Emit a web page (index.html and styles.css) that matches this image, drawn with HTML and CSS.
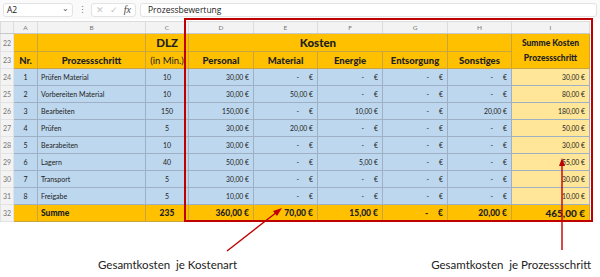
FILE: index.html
```html
<!DOCTYPE html>
<html lang="de">
<head>
    <meta charset="UTF-8">
    <title>Prozessbewertung</title>
    <link rel="stylesheet" href="styles.css">
</head>
<body>
<div class="page">
    <!-- Bearbeitungsleiste -->
    <div class="formula-bar">
        <div class="name-box">A2 <span class="chevron">&#8964;</span></div>
        <span class="dots">&#8942;</span>
        <div class="fx-box">
            <span class="fx-btn">&#10005;</span>
            <span class="fx-btn">&#10003;</span>
            <span class="fx-label">fx</span>
        </div>
        <div class="formula-input">Prozessbewertung</div>
    </div>

    <table class="sheet">
        <colgroup>
            <col style="width:13px"><col style="width:24px"><col style="width:108px"><col style="width:43px">
            <col style="width:65px"><col style="width:64px"><col style="width:65px"><col style="width:65px">
            <col style="width:64px"><col style="width:78px">
        </colgroup>
        <tr class="col-head">
            <td class="corner"></td><td>A</td><td>B</td><td>C</td><td>D</td><td>E</td><td>F</td><td>G</td><td>H</td><td>I</td>
        </tr>
        <tr class="h22">
            <td class="rn">22</td>
            <td class="hd"></td><td class="hd"></td>
            <td class="hd big">DLZ</td>
            <td class="hd big" colspan="4">Kosten</td>
            <td class="hd"></td>
            <td class="hd sum-head" rowspan="2">Summe Kosten<br>Prozessschritt</td>
        </tr>
        <tr class="h23">
            <td class="rn">23</td>
            <td class="hd">Nr.</td><td class="hd">Prozessschritt</td><td class="hd light">(in Min.)</td>
            <td class="hd">Personal</td><td class="hd">Material</td><td class="hd">Energie</td>
            <td class="hd">Entsorgung</td><td class="hd">Sonstiges</td>
        </tr>
        <tr><td class="rn">24</td><td class="c">1</td><td>Prüfen Material</td><td class="c">10</td><td class="n">30,00 €</td><td class="n"><i>-</i>€</td><td class="n"><i>-</i>€</td><td class="n"><i>-</i>€</td><td class="n"><i>-</i>€</td><td class="n tot">30,00 €</td></tr>
        <tr><td class="rn">25</td><td class="c">2</td><td>Vorbereiten Material</td><td class="c">10</td><td class="n">30,00 €</td><td class="n">50,00 €</td><td class="n"><i>-</i>€</td><td class="n"><i>-</i>€</td><td class="n"><i>-</i>€</td><td class="n tot">80,00 €</td></tr>
        <tr><td class="rn">26</td><td class="c">3</td><td>Bearbeiten</td><td class="c">150</td><td class="n">150,00 €</td><td class="n"><i>-</i>€</td><td class="n">10,00 €</td><td class="n"><i>-</i>€</td><td class="n">20,00 €</td><td class="n tot">180,00 €</td></tr>
        <tr><td class="rn">27</td><td class="c">4</td><td>Prüfen</td><td class="c">5</td><td class="n">30,00 €</td><td class="n">20,00 €</td><td class="n"><i>-</i>€</td><td class="n"><i>-</i>€</td><td class="n"><i>-</i>€</td><td class="n tot">50,00 €</td></tr>
        <tr><td class="rn">28</td><td class="c">5</td><td>Bearabeiten</td><td class="c">10</td><td class="n">30,00 €</td><td class="n"><i>-</i>€</td><td class="n"><i>-</i>€</td><td class="n"><i>-</i>€</td><td class="n"><i>-</i>€</td><td class="n tot">30,00 €</td></tr>
        <tr><td class="rn">29</td><td class="c">6</td><td>Lagern</td><td class="c">40</td><td class="n">50,00 €</td><td class="n"><i>-</i>€</td><td class="n">5,00 €</td><td class="n"><i>-</i>€</td><td class="n"><i>-</i>€</td><td class="n tot">55,00 €</td></tr>
        <tr><td class="rn">30</td><td class="c">7</td><td>Transport</td><td class="c">5</td><td class="n">30,00 €</td><td class="n"><i>-</i>€</td><td class="n"><i>-</i>€</td><td class="n"><i>-</i>€</td><td class="n"><i>-</i>€</td><td class="n tot">30,00 €</td></tr>
        <tr><td class="rn">31</td><td class="c">8</td><td>Freigabe</td><td class="c">5</td><td class="n">10,00 €</td><td class="n"><i>-</i>€</td><td class="n"><i>-</i>€</td><td class="n"><i>-</i>€</td><td class="n"><i>-</i>€</td><td class="n tot">10,00 €</td></tr>
        <tr class="sum-row">
            <td class="rn">32</td><td></td><td>Summe</td><td class="c">235</td>
            <td class="n">360,00 €</td><td class="n">70,00 €</td><td class="n">15,00 €</td><td class="n"><i>-</i>€</td><td class="n">20,00 €</td><td class="n grand">465,00 €</td>
        </tr>
    </table>

    <div class="notes">
        <span>Gesamtkosten&nbsp; je Kostenart</span>
        <span>Gesamtkosten&nbsp; je Prozessschritt</span>
    </div>

    <!-- Markierung und Pfeile liegen über der Tabelle -->
    <div class="highlight"></div>
    <svg class="arrows" width="600" height="277" viewBox="0 0 600 277">
        <line x1="227" y1="251" x2="277" y2="212" stroke="#c00000" stroke-width="1.4"/>
        <polygon points="282,208 273,211 277,216" fill="#c00000"/>
        <line x1="562" y1="250" x2="562" y2="164" stroke="#c00000" stroke-width="1.4"/>
        <polygon points="562,158 559,166 565,166" fill="#c00000"/>
    </svg>
</div>
</body>
</html>
```

FILE: styles.css
```css
body {
    margin: 0;
    background: #fff;
    font-family: Lato, "Open Sans", sans-serif;
}
.page {
    position: relative;
    width: 600px;
    height: 277px;
    overflow: hidden;
}
.formula-bar {
    display: flex;
    align-items: center;
    height: 19px;
    padding: 0 3px;
    gap: 4px;
    background: #fafafa;
    font-family: "Open Sans", sans-serif;
    font-size: 8.5px;
    color: #222;
}
.name-box {
    display: flex;
    justify-content: space-between;
    align-items: center;
    box-sizing: border-box;
    width: 70px;
    height: 14px;
    padding: 0 3px;
    background: #fff;
    border: 1px solid #e3e3e3;
    border-radius: 3px;
}
.chevron {
    font-size: 8px;
    color: #555;
    margin-top: -5px;
}
.dots {
    color: #777;
    font-size: 9px;
    width: 10px;
    text-align: center;
}
.fx-box {
    display: flex;
    align-items: center;
    justify-content: space-between;
    box-sizing: border-box;
    width: 45px;
    height: 14px;
    padding: 0 4px;
    background: #fff;
    border: 1px solid #e3e3e3;
    border-radius: 3px;
    color: #c4c4c4;
}
.fx-label {
    font-family: "Liberation Serif", serif;
    font-style: italic;
    color: #444;
    font-size: 10px;
}
.formula-input {
    flex: 1;
    box-sizing: border-box;
    height: 14px;
    line-height: 12px;
    padding-left: 7px;
    background: #fff;
    border: 1px solid #e3e3e3;
    border-radius: 3px;
}
.sheet {
    margin-top: 2px;
    border-collapse: collapse;
    table-layout: fixed;
    width: 589px;
    font-size: 7px;
    color: #222;
}
.sheet td {
    height: 16px;
    padding: 0 3px;
    border: 1px solid #9fb0c4;
    background: #bdd7ee;
    white-space: nowrap;
    overflow: hidden;
}
.sheet .col-head td {
    height: 11px;
    background: #f3f3f3;
    border: 1px solid #dcdcdc;
    border-bottom-color: #c8c8c8;
    color: #777;
    font-size: 6.5px;
    text-align: center;
}
.sheet td.rn {
    padding: 0;
    background: #f3f3f3;
    border: 1px solid #e2e2e2;
    color: #777;
    font-size: 7px;
    text-align: center;
}
.sheet .col-head td.corner {
    background: #f3f3f3;
}
.sheet td.hd {
    background: #ffc000;
    border-color: #c9a43f;
    font-weight: 900;
    font-size: 9.5px;
    text-align: center;
}
.h22 td {
    height: 17px;
}
.sheet td.big {
    font-size: 11.5px;
}
.sheet td.light {
    font-weight: normal;
    font-size: 9.5px;
}
.sheet td.sum-head {
    font-size: 8.5px;
    line-height: 15px;
}
.sheet td.c {
    text-align: center;
}
.sheet td.n {
    text-align: right;
    padding-right: 4px;
    font-size: 6.8px;
}
.sheet td.n i {
    font-style: normal;
    margin-right: 10px;
}
.sheet td.tot {
    background: #ffe699;
}
.sum-row td {
    height: 16px;
    background: #ffc000 !important;
    border-color: #c9a43f !important;
    font-weight: 900;
    font-size: 8.5px !important;
}
.sheet .sum-row td.rn {
    background: #f3f3f3 !important;
    border-color: #e2e2e2 !important;
    font-weight: normal;
    font-size: 7px !important;
}
.sheet .sum-row td.grand {
    font-size: 10px !important;
}
.notes {
    display: flex;
    justify-content: space-between;
    padding: 36px 9px 0 98px;
    font-size: 11.5px;
    color: #222;
}
.highlight {
    position: absolute;
    left: 184px;
    top: 18px;
    width: 405px;
    height: 200px;
    border: 2px solid #c00000;
}
.arrows {
    position: absolute;
    left: 0;
    top: 0;
}
```
